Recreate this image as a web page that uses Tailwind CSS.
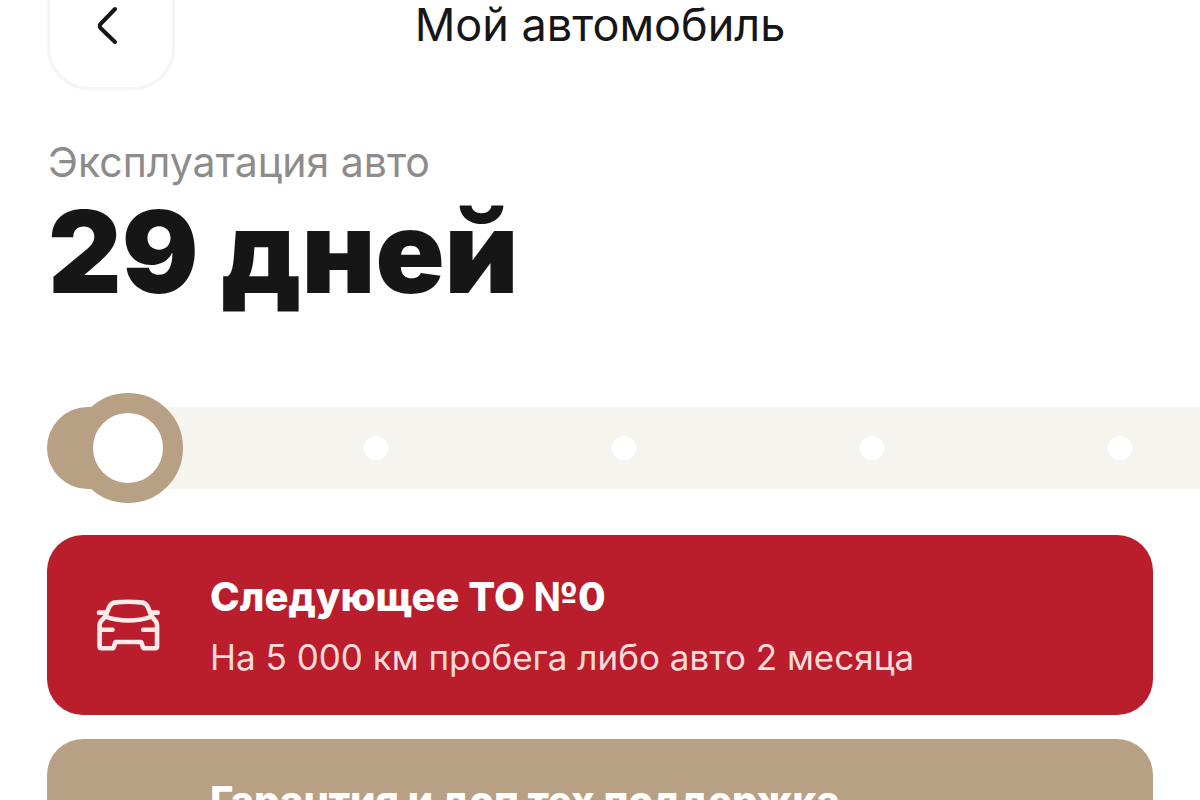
<!DOCTYPE html>
<html lang="ru">
<head>
    <meta charset="UTF-8">
    <meta name="viewport" content="width=device-width, initial-scale=1.0">
    <title>Мой автомобиль</title>
    <script src="https://cdn.jsdelivr.net/npm/@tailwindcss/browser@4"></script>
</head>
<body class="bg-white text-[#161616] font-['Inter',sans-serif] overflow-x-hidden">
    <!-- Header -->
    <header class="-mt-[38px] grid grid-cols-[1fr_auto_1fr] items-center px-[47px]">
        <button type="button" aria-label="Назад" class="flex size-32 items-center justify-center rounded-[42px] border-3 border-[#f5f5f5]">
            <svg class="h-10 w-6 -translate-x-1" viewBox="0 0 24 40" fill="none" stroke="currentColor" stroke-width="4" stroke-linecap="round" stroke-linejoin="round">
                <path d="M20 3 5.500 18Q4 20 5.500 22L20 36"/>
            </svg>
        </button>
        <h1 class="pb-0.5 text-[45px] leading-[52px]">Мой автомобиль</h1>
    </header>

    <main>
        <section class="mt-[48px] px-12">
            <p class="text-[41px] leading-[48px] text-[#8e8c8b]">Эксплуатация авто</p>
            <p class="text-[114px] leading-[132px] font-black">29 дней</p>
        </section>

        <!-- Service timeline -->
        <div class="mt-[89px] ml-[47px] flex h-[82px] items-center rounded-l-full bg-[#f6f4ee]">
            <div class="relative h-full w-[81px] shrink-0 rounded-l-full bg-[#b7a084]">
                <span class="absolute top-1/2 -right-[55px] size-[110px] -translate-y-1/2 rounded-full border-20 border-[#b7a084] bg-white"></span>
            </div>
            <ul class="ml-3 flex">
                <li class="flex w-[248px] shrink-0 justify-end"><span class="size-6 rounded-full bg-white"></span></li>
                <li class="flex w-[248px] shrink-0 justify-end"><span class="size-6 rounded-full bg-white"></span></li>
                <li class="flex w-[248px] shrink-0 justify-end"><span class="size-6 rounded-full bg-white"></span></li>
                <li class="flex w-[248px] shrink-0 justify-end"><span class="size-6 rounded-full bg-white"></span></li>
            </ul>
        </div>

        <!-- Cards -->
        <section class="mt-[46px] flex flex-col gap-6 px-[47px]">
            <article class="flex min-h-[180px] items-center gap-[49px] rounded-[36px] bg-[#ba1d2b] px-12 text-white">
                <svg class="h-[55px] w-[66px] shrink-0" viewBox="42 38 200 166" fill="none" stroke="#ffeaea" stroke-width="14" stroke-linecap="round" stroke-linejoin="round">
                    <path d="M73 94 84 67Q90 52 106 51Q143 47 181 51Q197 52 203 67L214 94"/>
                    <path d="M73 94Q143 118 214 94"/>
                    <path d="M54 82H76M211 82H232"/>
                    <path d="M73 94 60 108Q56 113 56 120V185Q56 190 61 190H94Q98 190 99 186L104 171H182L187 186Q188 190 192 190H225Q230 190 230 185V120Q230 113 226 108L214 94"/>
                    <path d="M60 134H95M188 134H226"/>
                </svg>
                <div class="pt-[3px]">
                    <h2 class="text-[40px] leading-[60px] font-extrabold">Следующее ТО №0</h2>
                    <p class="text-[35px] leading-[60px] text-[#ffdcdc]">На 5 000 км пробега либо авто 2 месяца</p>
                </div>
            </article>
            <article class="flex min-h-[180px] items-start gap-[49px] rounded-[36px] bg-[#b7a084] px-12 py-8 text-white">
                <svg class="h-[55px] w-[66px] shrink-0 self-center" viewBox="0 0 66 55" fill="none" stroke="currentColor" stroke-width="4" stroke-linecap="round" stroke-linejoin="round">
                    <path d="M33 4 54 11V27Q54 43 33 51Q12 43 12 27V11ZM24 27 31 34 43 21"/>
                </svg>
                <h2 class="text-[40px] leading-[60px] font-extrabold">Гарантия и доп тех поддержка</h2>
            </article>
        </section>
    </main>
</body>
</html>
